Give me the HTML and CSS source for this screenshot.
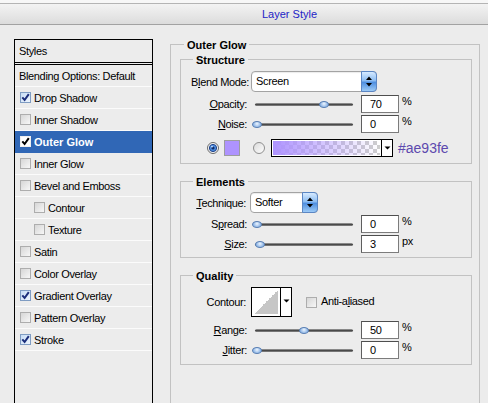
FILE: index.html
```html
<!DOCTYPE html>
<html>
<head>
<meta charset="utf-8">
<title>Layer Style</title>
<link rel="stylesheet" href="styles.css">
</head>
<body>
<div class="topstrip"></div>
<div class="titlebar"><span class="title">Layer Style</span></div>
<div class="main">
  <div class="stylelist">
    <div class="list-head">Styles</div>
    <div class="item plain">Blending Options: Default</div>
    <div class="item"><span class="cb checked"><svg viewBox="0 0 9 9" width="9" height="9"><path d="M1.3 4.4 L3.6 7 L7.8 1.2" /></svg></span>Drop Shadow</div>
    <div class="item"><span class="cb"></span>Inner Shadow</div>
    <div class="item selected"><span class="cb checked"><svg viewBox="0 0 9 9" width="9" height="9"><path d="M1.3 4.4 L3.6 7 L7.8 1.2" /></svg></span>Outer Glow</div>
    <div class="item"><span class="cb"></span>Inner Glow</div>
    <div class="item"><span class="cb"></span>Bevel and Emboss</div>
    <div class="item sub"><span class="cb"></span>Contour</div>
    <div class="item sub"><span class="cb"></span>Texture</div>
    <div class="item"><span class="cb"></span>Satin</div>
    <div class="item"><span class="cb"></span>Color Overlay</div>
    <div class="item"><span class="cb checked"><svg viewBox="0 0 9 9" width="9" height="9"><path d="M1.3 4.4 L3.6 7 L7.8 1.2" /></svg></span>Gradient Overlay</div>
    <div class="item"><span class="cb"></span>Pattern Overlay</div>
    <div class="item"><span class="cb checked"><svg viewBox="0 0 9 9" width="9" height="9"><path d="M1.3 4.4 L3.6 7 L7.8 1.2" /></svg></span>Stroke</div>
  </div>

  <div class="group outer">
    <div class="legend">Outer Glow</div>

    <div class="group inner structure">
      <div class="legend">Structure</div>
      <div class="row tall first">
        <span class="lbl wide">B<u>l</u>end Mode:</span>
        <div class="select blend"><span class="val">Screen</span><span class="stepper"><svg viewBox="0 0 8 13" width="8" height="13"><path d="M4 1.5 L7 5 L1 5 Z M4 11.5 L7 8 L1 8 Z"/></svg></span></div>
      </div>
      <div class="row gap3">
        <span class="lbl"><u>O</u>pacity:</span>
        <div class="slider"><div class="track"></div><div class="thumb" style="left:64px"></div></div>
        <span class="num">70</span><span class="unit">%</span>
      </div>
      <div class="row gap2">
        <span class="lbl"><u>N</u>oise:</span>
        <div class="slider"><div class="track"></div><div class="thumb" style="left:-3px"></div></div>
        <span class="num">0</span><span class="unit">%</span>
      </div>
      <div class="row colorrow">
        <span class="radio on"><svg viewBox="0 0 12 12" width="12" height="12"><circle cx="6" cy="6" r="5.5" fill="#f4f4f4" stroke="#6b6b6b"/><circle cx="6" cy="6" r="3.6" fill="#4d8fe3" stroke="#1d3f86"/><circle cx="6" cy="6" r="1.6" fill="#0f2a66"/><circle cx="5" cy="4.6" r="0.9" fill="#cfe4ff"/></svg></span>
        <span class="swatch"></span>
        <span class="radio off"><svg viewBox="0 0 12 12" width="12" height="12"><defs><linearGradient id="rg" x1="0" y1="0" x2="1" y2="1"><stop offset="0" stop-color="#d9d9d9"/><stop offset="1" stop-color="#ffffff"/></linearGradient></defs><circle cx="6" cy="6" r="5.5" fill="url(#rg)" stroke="#8e8e8e"/></svg></span>
        <div class="grad"><span class="gfill"></span><span class="garrow"><svg viewBox="0 0 7 4" width="7" height="4"><path d="M0.5 0.5 L6.5 0.5 L3.5 3.5 Z"/></svg></span></div>
        <span class="hex">#ae93fe</span>
      </div>
    </div>

    <div class="group inner elements">
      <div class="legend">Elements</div>
      <div class="row tall gap3">
        <span class="lbl tech"><u>T</u>echnique:</span>
        <div class="select technique"><span class="val">Softer</span><span class="stepper"><svg viewBox="0 0 8 13" width="8" height="13"><path d="M4 1.5 L7 5 L1 5 Z M4 11.5 L7 8 L1 8 Z"/></svg></span></div>
      </div>
      <div class="row gap2">
        <span class="lbl">S<u>p</u>read:</span>
        <div class="slider"><div class="track"></div><div class="thumb" style="left:-3px"></div></div>
        <span class="num">0</span><span class="unit">%</span>
      </div>
      <div class="row gap2">
        <span class="lbl"><u>S</u>ize:</span>
        <div class="slider"><div class="track"></div><div class="thumb" style="left:0px"></div></div>
        <span class="num">3</span><span class="unit">px</span>
      </div>
    </div>

    <div class="group inner quality">
      <div class="legend">Quality</div>
      <div class="row contourrow">
        <span class="lbl tech">Contour:</span>
        <div class="contour"><span class="preview"><span class="curve"></span></span><span class="carrow"><svg viewBox="0 0 7 4" width="7" height="4"><path d="M0.5 0.5 L6.5 0.5 L3.5 3.5 Z"/></svg></span></div>
        <span class="cb aa"></span>
        <span class="aalbl">Anti-a<u>l</u>iased</span>
      </div>
      <div class="row gap4">
        <span class="lbl"><u>R</u>ange:</span>
        <div class="slider"><div class="track"></div><div class="thumb" style="left:44px"></div></div>
        <span class="num">50</span><span class="unit">%</span>
      </div>
      <div class="row gap2">
        <span class="lbl"><u>J</u>itter:</span>
        <div class="slider"><div class="track"></div><div class="thumb" style="left:-3px"></div></div>
        <span class="num">0</span><span class="unit">%</span>
      </div>
    </div>
  </div>
</div>
</body>
</html>
```

FILE: styles.css
```css
html, body {
  margin: 0;
  padding: 0;
}

body {
  width: 488px;
  height: 403px;
  overflow: hidden;
  background: #ececec;
  font-family: "Liberation Sans", Arial, sans-serif;
  font-size: 11px;
  letter-spacing: -0.35px;
  color: #000;
}

u {
  text-decoration: underline;
  text-underline-offset: 1px;
}

.topstrip {
  height: 3px;
  background: #f7f7f7;
}

.titlebar {
  height: 20px;
  border-top: 1px solid #b4b4b4;
  border-bottom: 1px solid #a2a2a2;
  background: linear-gradient(#f3f3f3, #dcdcdc);
  padding-left: 262px;
  line-height: 20px;
}

.title {
  color: #2323c6;
  letter-spacing: 0;
}

.main {
  display: flex;
  align-items: flex-start;
}

/* ---------- left list ---------- */
.stylelist {
  flex: none;
  margin: 14px 0 0 14px;
  width: 137px;
  height: 363px;
  border: 1px solid #000;
  border-bottom: none;
  background: #ececec;
}

.list-head {
  height: 22px;
  line-height: 22px;
  padding-left: 4px;
  border-bottom: 3px double #000;
}

.item {
  height: 21px;
  border-bottom: 1px solid #fbfbfb;
  display: flex;
  align-items: center;
  padding-left: 5px;
  white-space: nowrap;
}

.item.plain {
  padding-left: 4px;
}

.item.sub {
  padding-left: 19px;
}

.item.selected {
  background: #3067b6;
  color: #fff;
  font-weight: bold;
  letter-spacing: 0;
  border-bottom-color: #3067b6;
}

.cb {
  flex: none;
  box-sizing: border-box;
  width: 11px;
  height: 11px;
  margin-right: 3px;
  border: 1px solid #adadad;
  background: linear-gradient(135deg, #d6d6d6, #f7f7f7);
  display: flex;
  align-items: center;
  justify-content: center;
}

.cb.checked {
  border-color: #7f9cc2;
  background: linear-gradient(135deg, #c6dcf5, #eef5fd);
}

.cb svg path {
  fill: none;
  stroke: #1a2d7a;
  stroke-width: 2;
}

.selected .cb.checked {
  border-color: #f0f0f0;
  background: #fff;
}

.selected .cb svg path {
  stroke: #000;
}

/* ---------- groups ---------- */
.group {
  border: 1px solid #c2c2c2;
  flex: none;
}

.outer {
  margin: 19px 0 0 17px;
  width: 308px;
  height: 358px;
  border-bottom: none;
}

.inner {
  width: 290px;
  margin: 17px 0 0 9px;
}

.inner.structure {
  margin-top: 7px;
  padding-bottom: 6px;
}

.inner.elements {
  padding-bottom: 4px;
}

.inner.quality {
  padding-bottom: 5px;
}

.legend {
  width: fit-content;
  height: 14px;
  line-height: 14px;
  margin: -7px 0 0 12px;
  padding: 0 3px;
  background: #ececec;
  font-weight: bold;
  letter-spacing: 0;
}

.outer > .legend {
  margin-left: 13px;
}

/* ---------- rows ---------- */
.row {
  display: flex;
  align-items: center;
  height: 18px;
  white-space: nowrap;
}

.row.tall {
  height: 21px;
}

.row.first {
  margin-top: 4px;
}

.gap2 { margin-top: 2px; }
.gap3 { margin-top: 3px; }
.gap4 { margin-top: 4px; }

.lbl {
  flex: none;
  width: 66px;
  text-align: right;
}

.lbl.wide {
  width: 68px;
}

.lbl.tech {
  width: 65px;
}

/* select */
.select {
  flex: none;
  box-sizing: border-box;
  height: 21px;
  border: 1px solid #a3a3a3;
  border-radius: 4px;
  background: #fff;
  display: flex;
  box-shadow: inset 0 1px 1px rgba(0,0,0,0.08);
}

.select.blend {
  width: 126px;
  margin-left: 2px;
}

.select.technique {
  width: 68px;
  margin-left: 4px;
}

.select .val {
  flex: 1;
  padding-left: 4px;
  line-height: 19px;
}

.stepper {
  flex: none;
  width: 14px;
  margin: -1px -1px -1px 0;
  border: 1px solid #5b86c4;
  border-radius: 0 4px 4px 0;
  background: linear-gradient(#d6eaff, #8dbdf2 45%, #4f8fe0 55%, #9ccaf6);
  display: flex;
  align-items: center;
  justify-content: center;
}

.stepper svg path {
  fill: #000;
}

/* slider */
.slider {
  flex: none;
  position: relative;
  width: 98px;
  height: 18px;
  margin-left: 8px;
  display: flex;
  align-items: center;
}

.track {
  width: 100%;
  height: 3px;
  border-radius: 2px;
  background: linear-gradient(#a8a8a8, #4a4a4a 50%, #8c8c8c);
}

.thumb {
  position: absolute;
  top: 6px;
  width: 8px;
  height: 5px;
  border: 1px solid #5a7fb3;
  border-radius: 50%;
  background: radial-gradient(circle at 50% 35%, #eef6ff, #8fb6e6 70%);
}

/* number input */
.num {
  flex: none;
  box-sizing: border-box;
  width: 38px;
  height: 18px;
  margin-left: 8px;
  padding-left: 8px;
  line-height: 17px;
  background: #fff;
  border: 1px solid #7c7c7c;
  border-top-color: #4e4e4e;
  border-left-color: #5e5e5e;
}

.unit {
  align-self: flex-start;
  margin-left: 3px;
  line-height: 13px;
}

/* colour row */
.colorrow {
  margin-top: 5px;
  height: 19px;
}

.radio {
  flex: none;
  width: 12px;
  height: 12px;
  display: block;
}

.radio svg {
  display: block;
}

.radio.on {
  margin-left: 26px;
}

.radio.off {
  margin-left: 13px;
}

.swatch {
  flex: none;
  box-sizing: border-box;
  width: 16px;
  height: 16px;
  margin-left: 5px;
  border: 1px solid #9d9d9d;
  background: #ae93fe;
}

.grad {
  flex: none;
  box-sizing: border-box;
  width: 122px;
  height: 18px;
  margin-left: 6px;
  border: 1px solid #000;
  display: flex;
}

.gfill {
  flex: 1;
  border: 1px solid #fff;
  background-color: #fff;
  background-image:
    linear-gradient(to right, #ae93fe, rgba(174, 147, 254, 0)),
    linear-gradient(45deg, #cdcdcd 25%, transparent 25%, transparent 75%, #cdcdcd 75%),
    linear-gradient(45deg, #cdcdcd 25%, transparent 25%, transparent 75%, #cdcdcd 75%);
  background-size: 100% 100%, 8px 8px, 8px 8px;
  background-position: 0 0, 0 0, 4px 4px;
}

.garrow, .carrow {
  flex: none;
  width: 10px;
  border-left: 1px solid #000;
  background: #fff;
  display: flex;
  justify-content: center;
  align-items: center;
}

.garrow svg path, .carrow svg path {
  fill: #000;
}

.hex {
  margin-left: 5px;
  font-size: 14px;
  letter-spacing: 0;
  color: #5d49ae;
}

/* contour row */
.contourrow {
  height: 30px;
  margin-top: 4px;
}

.contour {
  flex: none;
  box-sizing: border-box;
  width: 41px;
  height: 30px;
  margin-left: 5px;
  border: 1px solid #000;
  display: flex;
}

.preview {
  flex: 1;
  padding: 2px;
  background: #fff;
  display: flex;
}

.curve {
  flex: 1;
  background: linear-gradient(to top left, #c6c6c6 50%, #ffffff 50%);
}

.carrow {
  align-items: center;
  padding-bottom: 3px;
}

.cb.aa {
  margin-left: 14px;
  margin-right: 0;
}

.aalbl {
  margin-left: 4px;
  margin-top: -3px;
}
```
